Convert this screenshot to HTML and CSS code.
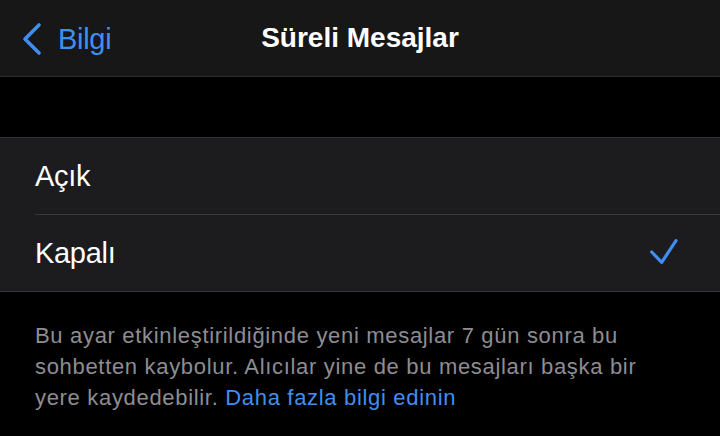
FILE: index.html
```html
<!DOCTYPE html>
<html lang="tr">
<head>
<meta charset="utf-8">
<title>Süreli Mesajlar</title>
<link rel="stylesheet" href="styles.css">
</head>
<body>
<header class="nav">
  <a class="back" href="#">
    <svg class="chevron" width="24" height="34" viewBox="0 0 24 34" aria-hidden="true">
      <polyline points="19,3 5,17 19,31" fill="none" stroke="currentColor" stroke-width="3.6" stroke-linecap="round" stroke-linejoin="round"/>
    </svg>
    <span>Bilgi</span>
  </a>
  <h1 class="title">Süreli Mesajlar</h1>
  <div class="spacer"></div>
</header>
<div class="gap"></div>
<ul class="group">
  <li class="row"><span class="label">Açık</span></li>
  <li class="row"><span class="label">Kapalı</span>
    <svg class="check" width="30" height="28" viewBox="0 0 30 28" aria-hidden="true">
      <polyline points="3.7,13 13.7,23.3 28,1.7" fill="none" stroke="currentColor" stroke-width="3.2" stroke-linecap="round" stroke-linejoin="round"/>
    </svg>
  </li>
</ul>
<p class="footer">Bu ayar etkinleştirildiğinde yeni mesajlar 7 gün sonra bu<br>sohbetten kaybolur. Alıcılar yine de bu mesajları başka bir<br>yere kaydedebilir. <a class="link" href="#">Daha fazla bilgi edinin</a></p>
</body>
</html>
```

FILE: styles.css
```css
* { box-sizing: border-box; }
html, body { margin: 0; padding: 0; background: #000; }
body {
  width: 720px;
  height: 436px;
  overflow: hidden;
  font-family: "Liberation Sans", Arial, sans-serif;
  color: #fff;
}
.nav {
  height: 77px;
  background: #171717;
  border-bottom: 1px solid #2e2e30;
  display: grid;
  grid-template-columns: 1fr auto 1fr;
  align-items: center;
}
.back {
  display: flex;
  align-items: center;
  gap: 14px;
  padding-left: 20px;
  color: #3f8ff3;
  text-decoration: none;
  font-size: 29px;
  letter-spacing: -0.3px;
}
.chevron { display: block; margin-top: 1px; }
.back span { margin-top: 2px; }
.title {
  margin: 0;
  font-size: 28px;
  font-weight: 700;
  letter-spacing: 0;
  text-align: center;
}
.gap { height: 60px; }
.group {
  list-style: none;
  margin: 0;
  padding: 0;
  background: #1c1c1e;
  border-top: 1px solid #333335;
  border-bottom: 1px solid #333335;
}
.row {
  height: 77px;
  margin-left: 35px;
  padding-right: 42px;
  display: flex;
  align-items: center;
  justify-content: space-between;
  font-size: 29px;
  letter-spacing: -0.3px;
  border-bottom: 1px solid #38383a;
}
.row:last-child { border-bottom: none; height: 76px; }
.check { display: block; color: #3f8ff3; margin-top: -1px; }
.footer {
  margin: 0;
  padding: 28px 35px 0;
  font-size: 22px;
  line-height: 31px;
  letter-spacing: 0.68px;
  color: #8d8d92;
}
.link { color: #3f8ff3; text-decoration: none; }
```
